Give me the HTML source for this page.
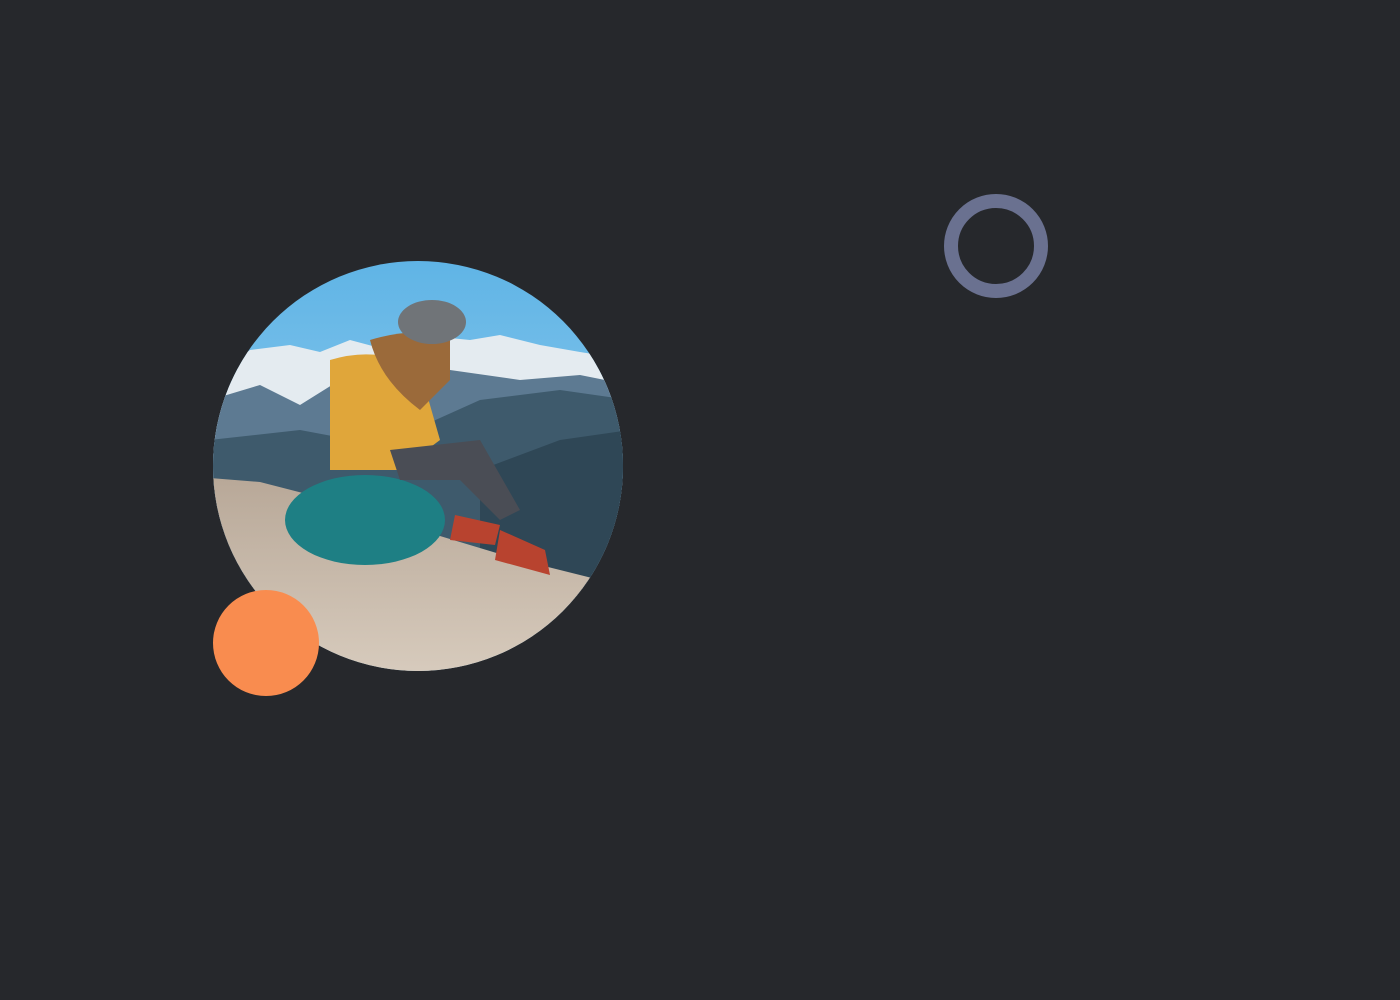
<!DOCTYPE html>
<html><head><meta charset="utf-8"><style>
html,body{margin:0;padding:0;width:1400px;height:1000px;background:#26282c;overflow:hidden}
svg{position:absolute;left:0;top:0}
</style></head><body>
<svg width="1400" height="1000" viewBox="0 0 1400 1000">
<defs>
<clipPath id="c"><circle cx="418" cy="466" r="205"/></clipPath>
<linearGradient id="sky" x1="0" y1="0" x2="0" y2="1">
<stop offset="0" stop-color="#5fb4e6"/><stop offset="1" stop-color="#a9d6ee"/></linearGradient>
<linearGradient id="rock" x1="0" y1="0" x2="0" y2="1">
<stop offset="0" stop-color="#b8a898"/><stop offset="1" stop-color="#d8ccbe"/></linearGradient>
</defs>
<g clip-path="url(#c)">
<rect x="210" y="258" width="420" height="420" fill="url(#sky)"/>
<path d="M210 380 L250 350 L290 345 L320 352 L350 340 L380 348 L420 335 L470 340 L500 335 L540 345 L580 352 L630 360 L630 600 L210 600Z" fill="#e4ebf0"/>
<path d="M210 400 L260 385 L300 405 L340 380 L400 395 L450 370 L520 380 L580 375 L630 385 L630 600 L210 600Z" fill="#5d7a92"/>
<path d="M210 440 L300 430 L380 445 L480 400 L560 390 L630 400 L630 600 L210 600Z" fill="#3e5a6c"/>
<path d="M480 470 L560 440 L630 430 L630 600 L480 600Z" fill="#2f4756"/>
<path d="M210 478 L260 482 L330 500 L420 530 L520 560 L600 580 L630 600 L630 680 L210 680Z" fill="url(#rock)"/>
<ellipse cx="365" cy="520" rx="80" ry="45" fill="#1e7f84"/>
<path d="M330 360 Q380 345 420 370 L440 440 L400 470 L330 470 Z" fill="#e0a63a"/>
<path d="M390 450 L480 440 L520 510 L500 520 L460 480 L400 480Z" fill="#4a4d55"/>
<path d="M455 515 L500 525 L495 545 L450 540Z" fill="#b8432f"/>
<path d="M500 530 L545 550 L550 575 L495 560Z" fill="#b8432f"/>
<path d="M370 340 Q380 380 420 410 L450 380 L450 340 Q420 325 370 340Z" fill="#9b6a3a"/>
<ellipse cx="432" cy="322" rx="34" ry="22" fill="#707478"/>
</g>
<circle cx="266" cy="643" r="53" fill="#f98c4f"/>
<circle cx="996" cy="246" r="45" fill="none" stroke="#6a7190" stroke-width="14"/>
</svg>
</body></html>
